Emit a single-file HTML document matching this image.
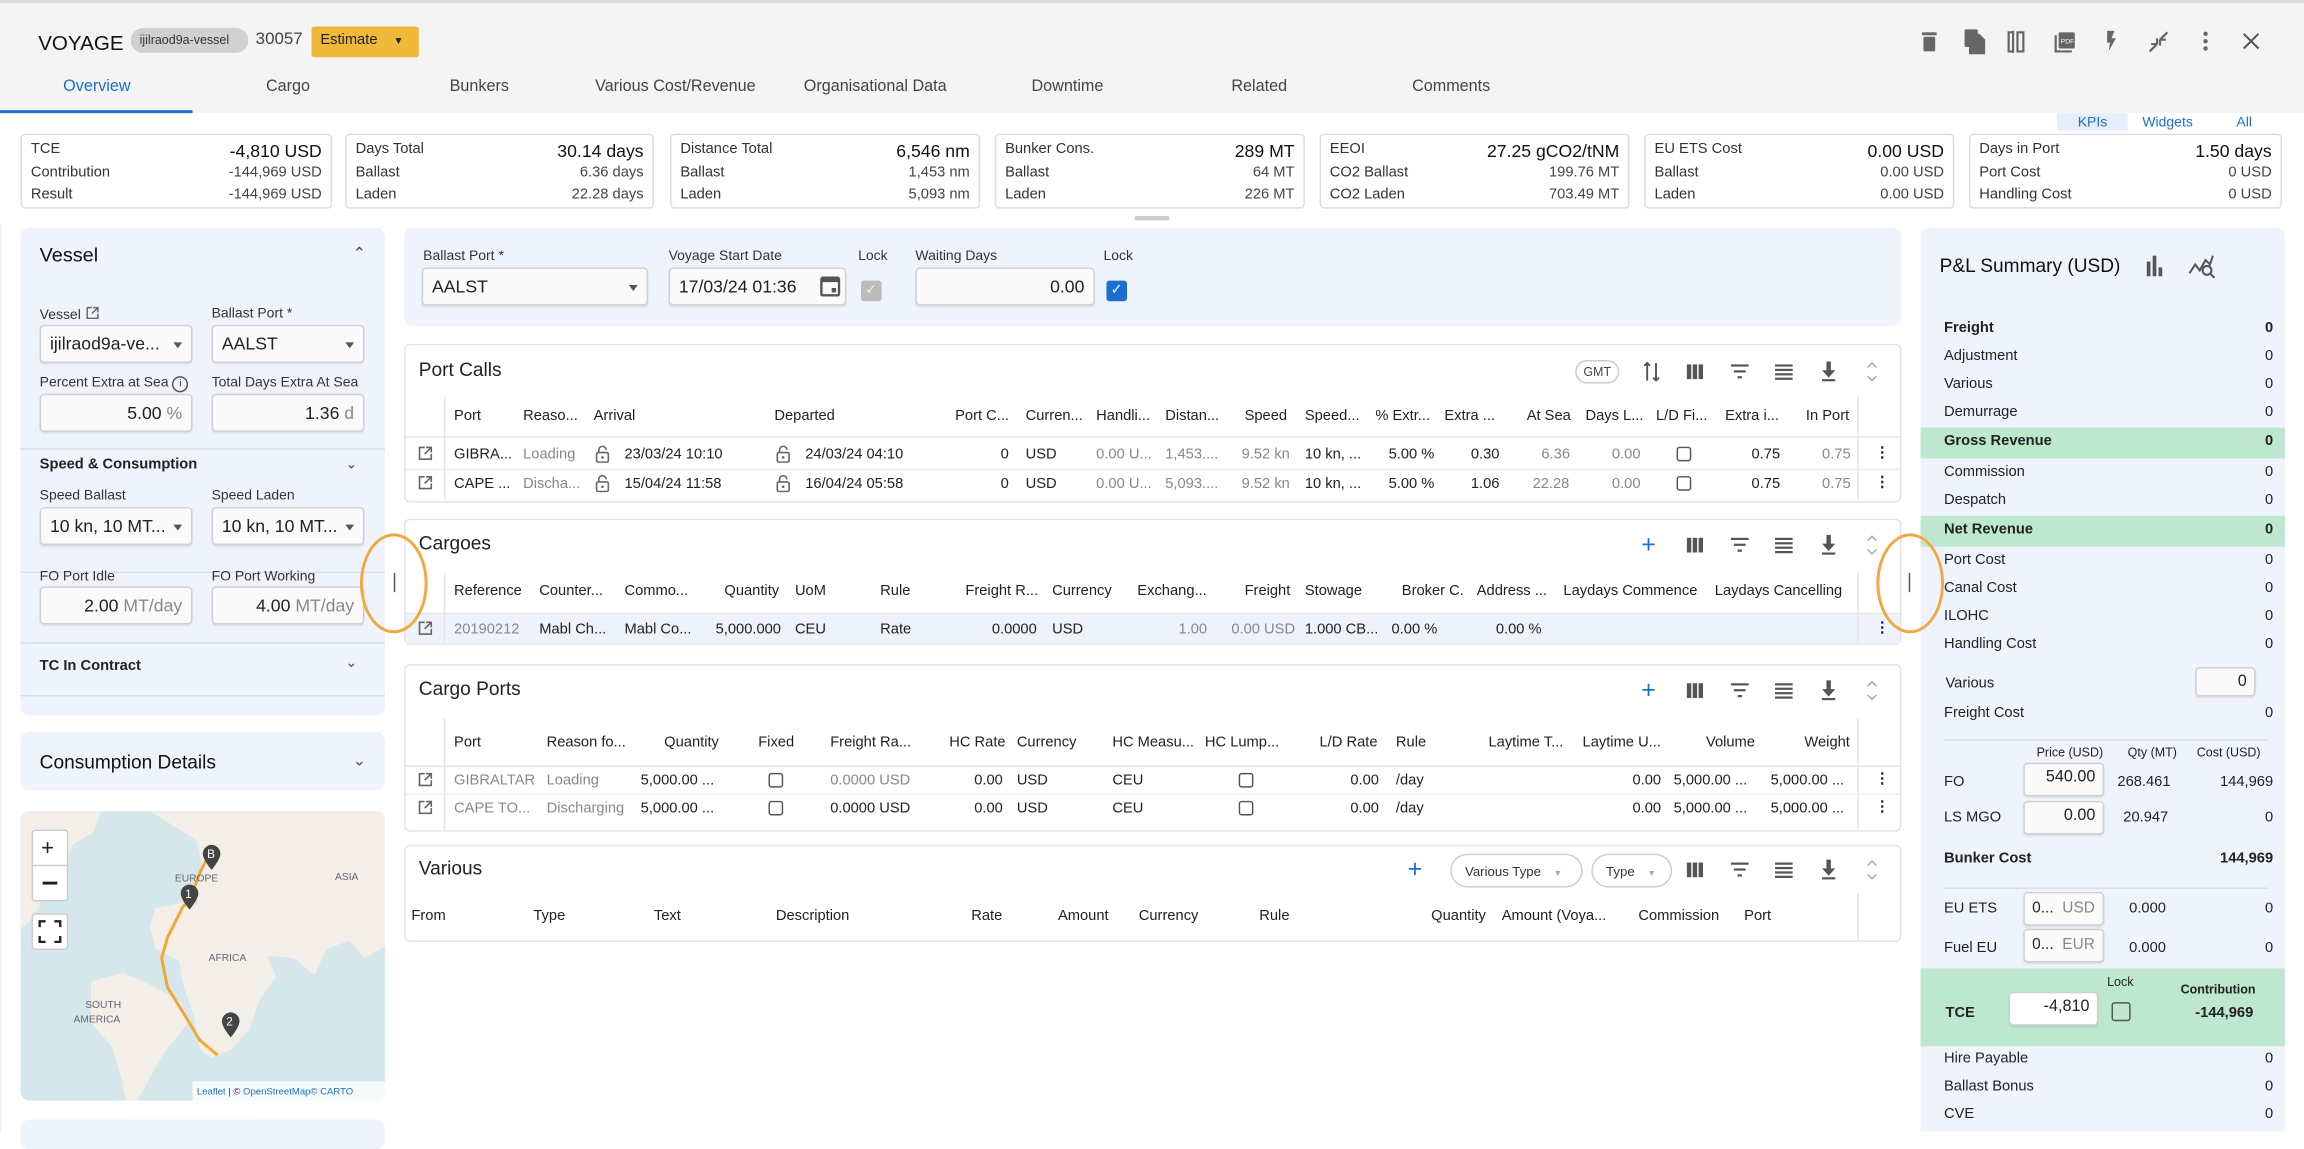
<!DOCTYPE html>
<html><head><meta charset="utf-8"><style>
*{box-sizing:border-box;margin:0;padding:0}
html,body{width:2304px;height:1132px;overflow:hidden;background:#fff}
#w{position:absolute;left:0;top:0;width:1568px;height:770px;transform:scale(1.46939);transform-origin:0 0;font-family:"Liberation Sans",Arial,sans-serif;color:#222;font-size:10px}
.a{position:absolute;white-space:nowrap}
.r{text-align:right}
.g{color:#888}
.card{position:absolute;background:#fff;border:1px solid #e3e3e3;border-radius:4px}
.kpi{position:absolute;top:91px;height:51px;width:212px;background:#fff;border:1px solid #ddd;border-radius:3px}
.kpi div{position:absolute;left:6px;right:6px;font-size:10px;color:#333}
.kpi b{font-weight:normal;float:right;font-size:12px;color:#111}
.kpi span{float:right;color:#444}
.lb{position:absolute;font-size:9.5px;color:#333;white-space:nowrap}
.inp{position:absolute;background:#fafafa;border:1px solid #d0d0d0;border-radius:3px;height:26px;font-size:12px;padding:5px 6px;box-shadow:0 1px 1px rgba(0,0,0,.08);white-space:nowrap;overflow:hidden}
.dd:after{content:"";position:absolute;right:6px;top:11px;border-left:3.5px solid transparent;border-right:3.5px solid transparent;border-top:4px solid #555}
.sep{position:absolute;height:1px;background:#d9dde5}
.lp{position:absolute;background:#eff4fc;border-radius:6px}
.ttl{position:absolute;font-size:13px;color:#222}
.cell{position:absolute;font-size:10px;white-space:nowrap}
.ck{position:absolute;width:10px;height:10px;border:1.3px solid #555;border-radius:2px}
.pl{position:absolute;left:1323px;right:21px;font-size:10px;height:14px}
.pl span{position:absolute;right:0}
.ico{position:absolute}
.lk{position:absolute;width:10px;height:12px}
.ex{position:absolute;width:11px;height:11px}
</style></head><body><div id="w">
<svg width="0" height="0" style="position:absolute"><defs>
<symbol id="lock" viewBox="0 0 10 12"><path d="M2.5 5V3.2a2.5 2.5 0 0 1 5 0" stroke="#666" stroke-width="1.1" fill="none"/><rect x="1" y="5" width="8" height="6.5" rx="1" stroke="#666" stroke-width="1.1" fill="none"/><circle cx="5" cy="8.3" r="0.9" fill="#666"/></symbol>
<symbol id="ext" viewBox="0 0 11 11"><path d="M5 1.5H1.5v8h8V6M6 1.5h3.5V5M9.5 1.5L5 6" stroke="#666" stroke-width="1.1" fill="none"/></symbol>
<symbol id="tb" viewBox="0 0 140 16"><g fill="#555"><rect x="2" y="3" width="3" height="10"/><rect x="6" y="3" width="3" height="10"/><rect x="10" y="3" width="3" height="10"/><rect x="32" y="3" width="12" height="1.5"/><rect x="34" y="7" width="8" height="1.5"/><rect x="36.5" y="11" width="3" height="1.5"/><rect x="62" y="3" width="12" height="1.5"/><rect x="62" y="6" width="12" height="1.5"/><rect x="62" y="9" width="12" height="1.5"/><rect x="62" y="12" width="12" height="1.5"/><path d="M97 1h3v6h3l-4.5 5-4.5-5h3z"/><rect x="94" y="13" width="9" height="1.5"/></g><path d="M125 5l3-3 3 3M125 11l3 3 3-3" stroke="#aaa" fill="none"/></symbol>
</defs></svg>
<!-- header -->
<div class="a" style="left:0;top:0;width:1568px;height:77px;background:#f4f4f4;border-top:2px solid #ddd"></div>
<div class="a" style="left:26px;top:21px;font-size:14px;color:#111">VOYAGE</div>
<div class="a" style="left:89px;top:19px;width:80px;height:17px;border-radius:9px;background:#d0d0d0;font-size:8.5px;padding:3px 6px;color:#333">ijilraod9a-vessel</div>
<div class="a" style="left:174px;top:21px;font-size:11.5px;color:#444">30057</div>
<div class="a" style="left:212px;top:18px;width:73px;height:21px;background:#f0b93a;border-radius:2px;font-size:10px;padding:4px 6px;color:#222">Estimate <span style="margin-left:8px;font-size:7px">▼</span></div>
<svg class="ico" style="left:1305px;top:19px" width="240" height="18" viewBox="0 0 240 18" fill="#666">
<rect x="3" y="3" width="10" height="2"/><rect x="4" y="6" width="8" height="10" rx="1"/>
<rect x="32" y="1" width="9" height="12" rx="1"/><path d="M35 4h7l4 4v10h-11z"/>
<path d="M65 2v15M62 3h3v13h-3zM68 3h4v13h-4z" stroke="#666" stroke-width="1.5" fill="none"/>
<rect x="96" y="3" width="11" height="11" rx="1"/><path d="M94 5v11h11" stroke="#666" stroke-width="1.5" fill="none"/><text x="97.5" y="10.5" font-size="4.5" fill="#fff" font-family="Liberation Sans">PDF</text>
<path d="M129 2h5l-2 5h3l-5 9 1-6h-2z"/>
<path d="M158 16l5-5M163 11v-4M163 11h-4M170 3l-5 5M165 8v4M165 8h4" stroke="#666" stroke-width="1.5" fill="none"/>
<circle cx="196" cy="4" r="1.5"/><circle cx="196" cy="9" r="1.5"/><circle cx="196" cy="14" r="1.5"/>
<path d="M222 4l10 10M232 4l-10 10" stroke="#555" stroke-width="1.4"/>
</svg>
<div class="a" style="left:0;top:53px;width:1568px;font-size:11px;color:#444">
<span class="a" style="left:43px;color:#1a6fd0">Overview</span><span class="a" style="left:181px">Cargo</span><span class="a" style="left:306px">Bunkers</span><span class="a" style="left:405px">Various Cost/Revenue</span><span class="a" style="left:547px">Organisational Data</span><span class="a" style="left:702px">Downtime</span><span class="a" style="left:838px">Related</span><span class="a" style="left:961px">Comments</span></div>
<div class="a" style="left:0;top:75px;width:131px;height:2px;background:#1a6fd0"></div>
<div class="a" style="left:1400px;top:77px;width:48px;height:12px;background:#e5eefb"></div>
<div class="a" style="left:1414px;top:78px;font-size:9.5px;color:#1a6fd0">KPIs</div>
<div class="a" style="left:1458px;top:78px;font-size:9.5px;color:#1a6fd0">Widgets</div>
<div class="a" style="left:1522px;top:78px;font-size:9.5px;color:#1a6fd0">All</div>
<!-- KPIs -->
<div class="kpi" style="left:14px"><div style="top:4px">TCE<b>-4,810 USD</b></div><div style="top:20px">Contribution<span>-144,969 USD</span></div><div style="top:35px">Result<span>-144,969 USD</span></div></div>
<div class="kpi" style="left:235px;width:210px"><div style="top:4px">Days Total<b>30.14 days</b></div><div style="top:20px">Ballast<span>6.36 days</span></div><div style="top:35px">Laden<span>22.28 days</span></div></div>
<div class="kpi" style="left:456px;width:211px"><div style="top:4px">Distance Total<b>6,546 nm</b></div><div style="top:20px">Ballast<span>1,453 nm</span></div><div style="top:35px">Laden<span>5,093 nm</span></div></div>
<div class="kpi" style="left:677px;width:211px"><div style="top:4px">Bunker Cons.<b>289 MT</b></div><div style="top:20px">Ballast<span>64 MT</span></div><div style="top:35px">Laden<span>226 MT</span></div></div>
<div class="kpi" style="left:898px;width:211px"><div style="top:4px">EEOI<b>27.25 gCO2/tNM</b></div><div style="top:20px">CO2 Ballast<span>199.76 MT</span></div><div style="top:35px">CO2 Laden<span>703.49 MT</span></div></div>
<div class="kpi" style="left:1119px;width:211px"><div style="top:4px">EU ETS Cost<b>0.00 USD</b></div><div style="top:20px">Ballast<span>0.00 USD</span></div><div style="top:35px">Laden<span>0.00 USD</span></div></div>
<div class="kpi" style="left:1340px;width:213px"><div style="top:4px">Days in Port<b>1.50 days</b></div><div style="top:20px">Port Cost<span>0 USD</span></div><div style="top:35px">Handling Cost<span>0 USD</span></div></div>
<div class="a" style="left:772px;top:147px;width:24px;height:3px;border-radius:2px;background:#ccc"></div>
<!-- left panel -->
<div class="a" style="left:0;top:152px;width:1px;height:618px;background:#eee"></div>
<div class="lp" style="left:14px;top:155px;width:248px;height:332px"></div>
<div class="a" style="left:27px;top:166px;font-size:13.5px;color:#111">Vessel</div>
<div class="a" style="left:240px;top:166px;font-size:11px;color:#444">&#8963;</div>
<div class="lb" style="left:27px;top:208px">Vessel <svg width="10" height="10" viewBox="0 0 11 11" style="vertical-align:-1px"><use href="#ext"/></svg></div>
<div class="lb" style="left:144px;top:208px">Ballast Port *</div>
<div class="inp dd" style="left:27px;top:221px;width:104px">ijilraod9a-ve...</div>
<div class="inp dd" style="left:144px;top:221px;width:104px">AALST</div>
<div class="lb" style="left:27px;top:255px">Percent Extra at Sea <span style="display:inline-block;width:11px;height:11px;border:1px solid #555;border-radius:50%;font-size:7px;text-align:center;line-height:9px">i</span></div>
<div class="lb" style="left:144px;top:255px">Total Days Extra At Sea</div>
<div class="inp r" style="left:27px;top:268px;width:104px">5.00 <span class="g">%</span></div>
<div class="inp r" style="left:144px;top:268px;width:104px">1.36 <span class="g">d</span></div>
<div class="sep" style="left:14px;top:305px;width:248px"></div>
<div class="a" style="left:27px;top:311px;font-size:10px;font-weight:bold">Speed &amp; Consumption</div>
<div class="a" style="left:235px;top:311px;font-size:10px;color:#555">&#8964;</div>
<div class="lb" style="left:27px;top:332px">Speed Ballast</div><div class="lb" style="left:144px;top:332px">Speed Laden</div>
<div class="inp dd" style="left:27px;top:345px;width:104px">10 kn, 10 MT...</div>
<div class="inp dd" style="left:144px;top:345px;width:104px">10 kn, 10 MT...</div>
<div class="sep" style="left:14px;top:389px;width:248px"></div>
<div class="lb" style="left:27px;top:387px">FO Port Idle</div><div class="lb" style="left:144px;top:387px">FO Port Working</div>
<div class="inp r" style="left:27px;top:399px;width:104px">2.00 <span class="g">MT/day</span></div>
<div class="inp r" style="left:144px;top:399px;width:104px">4.00 <span class="g">MT/day</span></div>
<div class="sep" style="left:14px;top:437px;width:248px"></div>
<div class="a" style="left:27px;top:448px;font-size:10px;font-weight:bold">TC In Contract</div>
<div class="a" style="left:235px;top:446px;font-size:10px;color:#555">&#8964;</div>
<div class="sep" style="left:14px;top:473px;width:248px"></div>
<div class="lp" style="left:14px;top:498px;width:248px;height:40px"></div>
<div class="a" style="left:27px;top:511px;font-size:13px;color:#111">Consumption Details</div>
<div class="a" style="left:240px;top:511px;font-size:11px;color:#555">&#8964;</div>
<!-- map -->
<svg class="ico" style="left:14px;top:552px;border-radius:6px" width="248" height="197" viewBox="0 0 248 197">
<rect width="248" height="197" fill="#d5e7ea"/>
<path d="M0 0h55l-6 15-14 8-6 20-12 12-8 18L0 80z" fill="#f3efe8"/>
<path d="M88 0h160v92l-14 8-10-12-16 6-8 18-14-12-24-2-12-10-16 2-12-4-6-12 6-8-4-12 6-14 -4-20z" fill="#f3efe8"/>
<path d="M92 66l20-4 26 6 16 2 10 10 10 14-6 6 6 12-12 18-6 18-12 14-14 6-8-6-4-22-8-24-2-14-16-8-4-16z" fill="#f3efe8"/>
<path d="M48 116l22-6 18 8 22 12 4 14-16 20-8 14-10 18-8 2-4-18-6-20-14-16z" fill="#f3efe8"/>
<path d="M120 24l-4 10-8 18-4 20-14 14-2 22 14 30 12 25 18 18-2 4" stroke="none" fill="none"/>
<path d="M129 28l-7 14-6 16-6 8-10 20-4 14 4 20 10 16 12 20 12 10" stroke="#f0a830" stroke-width="2" fill="none"/>
<text x="105" y="48" font-size="7" fill="#667" font-family="Liberation Sans">EUROPE</text>
<text x="214" y="47" font-size="7" fill="#667" font-family="Liberation Sans">ASIA</text>
<text x="128" y="102" font-size="7" fill="#667" font-family="Liberation Sans">AFRICA</text>
<text x="44" y="134" font-size="7" fill="#667" font-family="Liberation Sans">SOUTH</text>
<text x="36" y="144" font-size="7" fill="#667" font-family="Liberation Sans">AMERICA</text>
<g fill="#444"><path d="M124 29a6 6 0 1 1 12 0c0 4-6 11-6 11s-6-7-6-11z"/><path d="M109 56a6 6 0 1 1 12 0c0 4-6 11-6 11s-6-7-6-11z"/><path d="M137 143a6 6 0 1 1 12 0c0 4-6 11-6 11s-6-7-6-11z"/></g>
<text x="127" y="32" font-size="8" fill="#fff" font-family="Liberation Sans">B</text>
<text x="112" y="59" font-size="8" fill="#fff" font-family="Liberation Sans">1</text>
<text x="140" y="146" font-size="8" fill="#fff" font-family="Liberation Sans">2</text>
<rect x="8" y="13" width="24" height="48" rx="2" fill="#fff" stroke="#ccc"/><line x1="8" y1="37" x2="32" y2="37" stroke="#ccc"/>
<text x="14" y="30" font-size="15" fill="#222" font-family="Liberation Sans">+</text><rect x="15" y="48" width="10" height="2" fill="#222"/>
<rect x="8" y="70" width="24" height="24" rx="2" fill="#fff" stroke="#ccc"/>
<path d="M13 79v-4h4M23 75h4v4M27 85v4h-4M17 89h-4v-4" stroke="#222" stroke-width="1.6" fill="none"/>
<rect x="117" y="184" width="131" height="13" fill="#fff" opacity=".8"/>
<text x="120" y="193" font-size="6.5" fill="#1a6fd0" font-family="Liberation Sans">Leaflet <tspan fill="#333">| ©</tspan> OpenStreetMap© CARTO</text>
</svg>
<div class="lp" style="left:14px;top:762px;width:248px;height:20px"></div>
<!-- top form -->
<div class="lp" style="left:275px;top:155px;width:1019px;height:67px"></div>
<div class="lb" style="left:288px;top:169px">Ballast Port *</div>
<div class="inp dd" style="left:287px;top:182px;width:154px">AALST</div>
<div class="lb" style="left:455px;top:169px">Voyage Start Date</div>
<div class="inp" style="left:455px;top:182px;width:121px">17/03/24 01:36</div>
<svg class="ico" style="left:558px;top:186px" width="14" height="16" viewBox="0 0 14 16"><rect x="1" y="3" width="12" height="12" rx="1" fill="none" stroke="#555" stroke-width="1.6"/><rect x="1" y="3" width="12" height="3" fill="#555"/><rect x="8" y="10" width="3" height="3" fill="#555"/></svg>
<div class="lb g" style="left:584px;top:169px">Lock</div>
<div class="a" style="left:586px;top:191px;width:14px;height:14px;background:#bbb;border-radius:2px;color:#eee;font-size:10px;text-align:center;line-height:14px">✓</div>
<div class="lb" style="left:623px;top:169px">Waiting Days</div>
<div class="inp r" style="left:623px;top:182px;width:122px">0.00</div>
<div class="lb" style="left:751px;top:169px">Lock</div>
<div class="a" style="left:753px;top:191px;width:14px;height:14px;background:#1a6fd0;border-radius:2px;color:#fff;font-size:10px;text-align:center;line-height:14px">✓</div>
<!-- Port Calls -->
<div class="card" style="left:275px;top:234px;width:1019px;height:108px"></div>
<div class="ttl" style="left:285px;top:244px">Port Calls</div>
<div class="a" style="left:1072px;top:245px;width:30px;height:16px;border:1px solid #ccc;border-radius:8px;font-size:8.5px;text-align:center;line-height:14px;color:#444">GMT</div>
<svg class="ico" style="left:1117px;top:245px" width="14" height="16" viewBox="0 0 14 16"><path d="M4 14V2M2 4l2-2 2 2M10 2v12M8 12l2 2 2-2" stroke="#555" stroke-width="1.3" fill="none"/></svg>
<svg class="ico" style="left:1146px;top:245px" width="140" height="16"><use href="#tb"/></svg>
<div class="a" style="left:302px;top:270px;width:1px;height:70px;background:#e5e5e5"></div>
<div class="a" style="left:1264px;top:270px;width:1px;height:70px;background:#e5e5e5"></div>
<div class="a" style="left:276px;top:297px;width:1017px;height:1px;background:#e5e5e5"></div>
<div class="a" style="left:276px;top:319px;width:1017px;height:1px;background:#eee"></div>
<div>
<span class="cell" style="left:309px;top:278px">Port</span><span class="cell" style="left:356px;top:278px">Reaso...</span><span class="cell" style="left:404px;top:278px">Arrival</span><span class="cell" style="left:527px;top:278px">Departed</span><span class="cell" style="left:650px;top:278px">Port C...</span><span class="cell" style="left:698px;top:278px">Curren...</span><span class="cell" style="left:746px;top:278px">Handli...</span><span class="cell" style="left:793px;top:278px">Distan...</span><span class="cell" style="left:847px;top:278px">Speed</span><span class="cell" style="left:888px;top:278px">Speed...</span><span class="cell" style="left:936px;top:278px">% Extr...</span><span class="cell" style="left:983px;top:278px">Extra ...</span><span class="cell" style="left:1039px;top:278px">At Sea</span><span class="cell" style="left:1079px;top:278px">Days L...</span><span class="cell" style="left:1127px;top:278px">L/D Fi...</span><span class="cell" style="left:1174px;top:278px">Extra i...</span><span class="cell" style="left:1229px;top:278px">In Port</span>
</div>
<div>
<svg class="ex" style="left:284px;top:303px"><use href="#ext"/></svg><span class="cell" style="left:309px;top:304px">GIBRA...</span><span class="cell g" style="left:356px;top:304px">Loading</span><svg class="lk" style="left:405px;top:303px"><use href="#lock"/></svg><span class="cell" style="left:425px;top:304px">23/03/24 10:10</span><svg class="lk" style="left:528px;top:303px"><use href="#lock"/></svg><span class="cell" style="left:548px;top:304px">24/03/24 04:10</span><span class="cell" style="left:681px;top:304px">0</span><span class="cell" style="left:698px;top:304px">USD</span><span class="cell g" style="left:746px;top:304px">0.00 U...</span><span class="cell g" style="left:793px;top:304px">1,453....</span><span class="cell g" style="left:845px;top:304px">9.52 kn</span><span class="cell" style="left:888px;top:304px">10 kn, ...</span><span class="cell" style="left:945px;top:304px">5.00 %</span><span class="cell" style="left:1001px;top:304px">0.30</span><span class="cell g" style="left:1049px;top:304px">6.36</span><span class="cell g" style="left:1097px;top:304px">0.00</span><span class="ck" style="left:1141px;top:304px"></span><span class="cell" style="left:1192px;top:304px">0.75</span><span class="cell g" style="left:1240px;top:304px">0.75</span><span class="cell" style="left:1276px;top:303px;font-weight:bold">⋮</span>
<svg class="ex" style="left:284px;top:323px"><use href="#ext"/></svg><span class="cell" style="left:309px;top:324px">CAPE ...</span><span class="cell g" style="left:356px;top:324px">Discha...</span><svg class="lk" style="left:405px;top:323px"><use href="#lock"/></svg><span class="cell" style="left:425px;top:324px">15/04/24 11:58</span><svg class="lk" style="left:528px;top:323px"><use href="#lock"/></svg><span class="cell" style="left:548px;top:324px">16/04/24 05:58</span><span class="cell" style="left:681px;top:324px">0</span><span class="cell" style="left:698px;top:324px">USD</span><span class="cell g" style="left:746px;top:324px">0.00 U...</span><span class="cell g" style="left:793px;top:324px">5,093....</span><span class="cell g" style="left:845px;top:324px">9.52 kn</span><span class="cell" style="left:888px;top:324px">10 kn, ...</span><span class="cell" style="left:945px;top:324px">5.00 %</span><span class="cell" style="left:1001px;top:324px">1.06</span><span class="cell g" style="left:1043px;top:324px">22.28</span><span class="cell g" style="left:1097px;top:324px">0.00</span><span class="ck" style="left:1141px;top:324px"></span><span class="cell" style="left:1192px;top:324px">0.75</span><span class="cell g" style="left:1240px;top:324px">0.75</span><span class="cell" style="left:1276px;top:323px;font-weight:bold">⋮</span>
</div>
<!-- Cargoes -->
<div class="card" style="left:275px;top:353px;width:1019px;height:86px"></div>
<div class="ttl" style="left:285px;top:362px">Cargoes</div>
<div class="a" style="left:1117px;top:361px;font-size:17px;color:#1a6fd0">+</div>
<svg class="ico" style="left:1146px;top:363px" width="140" height="16"><use href="#tb"/></svg>
<div class="a" style="left:276px;top:418px;width:1017px;height:20px;background:#eef2fb"></div>
<div class="a" style="left:302px;top:390px;width:1px;height:48px;background:#e5e5e5"></div>
<div class="a" style="left:1264px;top:390px;width:1px;height:48px;background:#e5e5e5"></div>
<div class="a" style="left:276px;top:417px;width:1017px;height:1px;background:#e5e5e5"></div>
<div>
<span class="cell" style="left:309px;top:397px">Reference</span><span class="cell" style="left:367px;top:397px">Counter...</span><span class="cell" style="left:425px;top:397px">Commo...</span><span class="cell" style="left:493px;top:397px">Quantity</span><span class="cell" style="left:541px;top:397px">UoM</span><span class="cell" style="left:599px;top:397px">Rule</span><span class="cell" style="left:657px;top:397px">Freight R...</span><span class="cell" style="left:716px;top:397px">Currency</span><span class="cell" style="left:774px;top:397px">Exchang...</span><span class="cell" style="left:847px;top:397px">Freight</span><span class="cell" style="left:888px;top:397px">Stowage</span><span class="cell" style="left:954px;top:397px">Broker C.</span><span class="cell" style="left:1005px;top:397px">Address ...</span><span class="cell" style="left:1064px;top:397px">Laydays Commence</span><span class="cell" style="left:1167px;top:397px">Laydays Cancelling</span>
<svg class="ex" style="left:284px;top:422px"><use href="#ext"/></svg><span class="cell g" style="left:309px;top:423px">20190212</span><span class="cell" style="left:367px;top:423px">Mabl Ch...</span><span class="cell" style="left:425px;top:423px">Mabl Co...</span><span class="cell" style="left:487px;top:423px">5,000.000</span><span class="cell" style="left:541px;top:423px">CEU</span><span class="cell" style="left:599px;top:423px">Rate</span><span class="cell" style="left:675px;top:423px">0.0000</span><span class="cell" style="left:716px;top:423px">USD</span><span class="cell g" style="left:802px;top:423px">1.00</span><span class="cell g" style="left:838px;top:423px">0.00 USD</span><span class="cell" style="left:888px;top:423px">1.000 CB...</span><span class="cell" style="left:947px;top:423px">0.00 %</span><span class="cell" style="left:1018px;top:423px">0.00 %</span><span class="cell" style="left:1276px;top:422px;font-weight:bold">⋮</span>
</div>
<!-- Cargo Ports -->
<div class="card" style="left:275px;top:452px;width:1019px;height:114px"></div>
<div class="ttl" style="left:285px;top:461px">Cargo Ports</div>
<div class="a" style="left:1117px;top:460px;font-size:17px;color:#1a6fd0">+</div>
<svg class="ico" style="left:1146px;top:462px" width="140" height="16"><use href="#tb"/></svg>
<div class="a" style="left:302px;top:489px;width:1px;height:76px;background:#e5e5e5"></div>
<div class="a" style="left:1264px;top:489px;width:1px;height:76px;background:#e5e5e5"></div>
<div class="a" style="left:276px;top:521px;width:1017px;height:1px;background:#e5e5e5"></div>
<div class="a" style="left:276px;top:540px;width:1017px;height:1px;background:#eee"></div>
<div>
<span class="cell" style="left:309px;top:500px">Port</span><span class="cell" style="left:372px;top:500px">Reason fo...</span><span class="cell" style="left:452px;top:500px">Quantity</span><span class="cell" style="left:516px;top:500px">Fixed</span><span class="cell" style="left:565px;top:500px">Freight Ra...</span><span class="cell" style="left:646px;top:500px">HC Rate</span><span class="cell" style="left:692px;top:500px">Currency</span><span class="cell" style="left:757px;top:500px">HC Measu...</span><span class="cell" style="left:820px;top:500px">HC Lump...</span><span class="cell" style="left:898px;top:500px">L/D Rate</span><span class="cell" style="left:950px;top:500px">Rule</span><span class="cell" style="left:1013px;top:500px">Laytime T...</span><span class="cell" style="left:1077px;top:500px">Laytime U...</span><span class="cell" style="left:1161px;top:500px">Volume</span><span class="cell" style="left:1228px;top:500px">Weight</span>
<svg class="ex" style="left:284px;top:525px"><use href="#ext"/></svg><span class="cell g" style="left:309px;top:526px">GIBRALTAR</span><span class="cell g" style="left:372px;top:526px">Loading</span><span class="cell" style="left:436px;top:526px">5,000.00 ...</span><span class="ck" style="left:523px;top:526px"></span><span class="cell g" style="left:565px;top:526px">0.0000 USD</span><span class="cell" style="left:663px;top:526px">0.00</span><span class="cell" style="left:692px;top:526px">USD</span><span class="cell" style="left:757px;top:526px">CEU</span><span class="ck" style="left:843px;top:526px"></span><span class="cell" style="left:919px;top:526px">0.00</span><span class="cell" style="left:950px;top:526px">/day</span><span class="cell" style="left:1111px;top:526px">0.00</span><span class="cell" style="left:1139px;top:526px">5,000.00 ...</span><span class="cell" style="left:1205px;top:526px">5,000.00 ...</span><span class="cell" style="left:1276px;top:525px;font-weight:bold">⋮</span>
<svg class="ex" style="left:284px;top:544px"><use href="#ext"/></svg><span class="cell g" style="left:309px;top:545px">CAPE TO...</span><span class="cell g" style="left:372px;top:545px">Discharging</span><span class="cell" style="left:436px;top:545px">5,000.00 ...</span><span class="ck" style="left:523px;top:545px"></span><span class="cell" style="left:565px;top:545px">0.0000 USD</span><span class="cell" style="left:663px;top:545px">0.00</span><span class="cell" style="left:692px;top:545px">USD</span><span class="cell" style="left:757px;top:545px">CEU</span><span class="ck" style="left:843px;top:545px"></span><span class="cell" style="left:919px;top:545px">0.00</span><span class="cell" style="left:950px;top:545px">/day</span><span class="cell" style="left:1111px;top:545px">0.00</span><span class="cell" style="left:1139px;top:545px">5,000.00 ...</span><span class="cell" style="left:1205px;top:545px">5,000.00 ...</span><span class="cell" style="left:1276px;top:544px;font-weight:bold">⋮</span>
</div>
<!-- Various -->
<div class="card" style="left:275px;top:575px;width:1019px;height:66px"></div>
<div class="ttl" style="left:285px;top:583px">Various</div>
<div class="a" style="left:958px;top:582px;font-size:17px;color:#1a6fd0">+</div>
<div class="a" style="left:987px;top:581px;width:90px;height:23px;border:1px solid #ccc;border-radius:12px;font-size:9px;padding:6px 9px;color:#333">Various Type <span style="color:#aaa;margin-left:6px;font-size:6px">▼</span></div>
<div class="a" style="left:1083px;top:581px;width:55px;height:23px;border:1px solid #ccc;border-radius:12px;font-size:9px;padding:6px 9px;color:#333">Type <span style="color:#aaa;margin-left:6px;font-size:6px">▼</span></div>
<svg class="ico" style="left:1146px;top:584px" width="140" height="16"><use href="#tb"/></svg>
<div class="a" style="left:1264px;top:608px;width:1px;height:32px;background:#e5e5e5"></div>
<div>
<span class="cell" style="left:280px;top:618px">From</span><span class="cell" style="left:363px;top:618px">Type</span><span class="cell" style="left:445px;top:618px">Text</span><span class="cell" style="left:528px;top:618px">Description</span><span class="cell" style="left:661px;top:618px">Rate</span><span class="cell" style="left:720px;top:618px">Amount</span><span class="cell" style="left:775px;top:618px">Currency</span><span class="cell" style="left:857px;top:618px">Rule</span><span class="cell" style="left:974px;top:618px">Quantity</span><span class="cell" style="left:1022px;top:618px">Amount (Voya...</span><span class="cell" style="left:1115px;top:618px">Commission</span><span class="cell" style="left:1187px;top:618px">Port</span>
</div>
<!-- P&L -->
<div class="lp" style="left:1307px;top:155px;width:248px;height:615px;border-radius:6px 6px 0 0"></div>
<div class="a" style="left:1320px;top:173px;font-size:13px;color:#111">P&amp;L Summary (USD)</div>
<svg class="ico" style="left:1458px;top:172px" width="60" height="20" viewBox="0 0 60 20"><rect x="3" y="6" width="2.5" height="10" fill="#555"/><rect x="7" y="2" width="2.5" height="14" fill="#555"/><rect x="11" y="10" width="2.5" height="6" fill="#555"/><path d="M32 14l4-6 3 4 4-7 3 3 2-6" stroke="#555" fill="none" stroke-width="1.4"/><circle cx="44" cy="12" r="3" stroke="#555" fill="none" stroke-width="1.4"/><path d="M46 14l3 3" stroke="#555" stroke-width="1.4"/></svg>
<div class="a" style="left:1307px;top:291px;width:248px;height:21px;background:#bde8cf"></div>
<div class="a" style="left:1307px;top:351px;width:248px;height:21px;background:#bde8cf"></div>
<div class="pl" style="top:218px;font-weight:bold">Freight<span>0</span></div>
<div class="pl" style="top:237px">Adjustment<span>0</span></div>
<div class="pl" style="top:256px">Various<span>0</span></div>
<div class="pl" style="top:275px">Demurrage<span>0</span></div>
<div class="pl" style="top:295px;font-weight:bold">Gross Revenue<span>0</span></div>
<div class="pl" style="top:316px">Commission<span>0</span></div>
<div class="pl" style="top:335px">Despatch<span>0</span></div>
<div class="pl" style="top:355px;font-weight:bold">Net Revenue<span>0</span></div>
<div class="pl" style="top:376px">Port Cost<span>0</span></div>
<div class="pl" style="top:395px">Canal Cost<span>0</span></div>
<div class="pl" style="top:414px">ILOHC<span>0</span></div>
<div class="pl" style="top:433px">Handling Cost<span>0</span></div>
<div class="pl" style="top:460px;left:1324px">Various</div>
<div class="inp r" style="left:1494px;top:454px;width:41px;height:20px;padding:3px 5px;font-size:11px">0</div>
<div class="pl" style="top:480px">Freight Cost<span>0</span></div>
<div class="sep" style="left:1323px;top:503px;width:220px"></div>
<div class="a" style="left:1386px;top:507px;font-size:8.5px">Price (USD)</div>
<div class="a" style="left:1448px;top:507px;font-size:8.5px">Qty (MT)</div>
<div class="a" style="left:1495px;top:507px;font-size:8.5px">Cost (USD)</div>
<div class="pl" style="top:527px">FO<span>144,969</span></div>
<div class="inp r" style="left:1377px;top:519px;width:55px;height:23px;padding:3px 5px;font-size:11px">540.00</div>
<div class="a" style="left:1441px;top:527px;font-size:10px">268.461</div>
<div class="pl" style="top:551px">LS MGO<span>0</span></div>
<div class="inp r" style="left:1377px;top:545px;width:55px;height:23px;padding:3px 5px;font-size:11px">0.00</div>
<div class="a" style="left:1445px;top:551px;font-size:10px">20.947</div>
<div class="pl" style="top:579px;font-weight:bold">Bunker Cost<span>144,969</span></div>
<div class="sep" style="left:1323px;top:604px;width:220px"></div>
<div class="pl" style="top:613px">EU ETS<span>0</span></div>
<div class="inp" style="left:1377px;top:607px;width:55px;height:23px;padding:4px 5px;font-size:10.5px">0... <span class="g" style="margin-left:3px">USD</span></div>
<div class="a" style="left:1449px;top:613px;font-size:10px">0.000</div>
<div class="pl" style="top:640px">Fuel EU<span>0</span></div>
<div class="inp" style="left:1377px;top:632px;width:55px;height:23px;padding:4px 5px;font-size:10.5px">0... <span class="g" style="margin-left:3px">EUR</span></div>
<div class="a" style="left:1449px;top:640px;font-size:10px">0.000</div>
<div class="a" style="left:1307px;top:659px;width:248px;height:53px;background:#bde8cf"></div>
<div class="a" style="left:1434px;top:663px;font-size:8.5px">Lock</div>
<div class="a" style="left:1484px;top:668px;font-size:8.5px;font-weight:bold">Contribution</div>
<div class="a" style="left:1324px;top:684px;font-size:10px;font-weight:bold">TCE</div>
<div class="inp r" style="left:1367px;top:675px;width:61px;height:23px;padding:3px 5px;font-size:11px;background:#fff">-4,810</div>
<div class="ck" style="left:1437px;top:682px;width:13px;height:13px"></div>
<div class="a" style="left:1494px;top:684px;font-size:10px;font-weight:bold">-144,969</div>
<div class="pl" style="top:715px">Hire Payable<span>0</span></div>
<div class="pl" style="top:734px">Ballast Bonus<span>0</span></div>
<div class="pl" style="top:753px">CVE<span>0</span></div>
<!-- orange circles (on top) -->
<div class="a" style="left:245px;top:363px;width:46px;height:68px;border:2px solid #f4a640;border-radius:50%"></div>
<div class="a" style="left:268px;top:390px;width:1px;height:13px;background:#555"></div>
<div class="a" style="left:1277px;top:363px;width:46px;height:68px;border:2px solid #f4a640;border-radius:50%"></div>
<div class="a" style="left:1299px;top:390px;width:1px;height:13px;background:#555"></div>
</div></body></html>
